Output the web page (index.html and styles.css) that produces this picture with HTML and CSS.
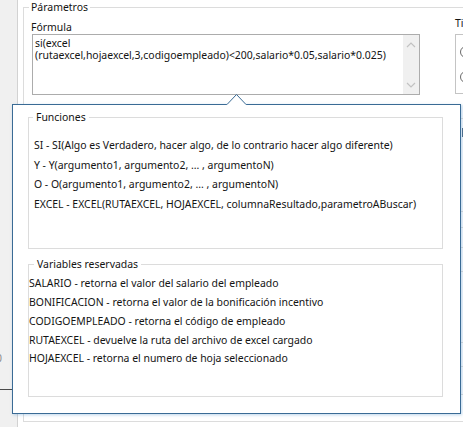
FILE: index.html
```html
<!DOCTYPE html>
<html lang="es">
<head>
<meta charset="utf-8">
<link rel="stylesheet" href="styles.css">
</head>
<body>
<div class="app">
  <div class="strip">
    <span class="strip-num">0</span>
    <div class="strip-line"></div>
  </div>
  <div class="main">
    <div class="group">
      <div class="legend legend-main">Párametros</div>
      <div class="row">
        <div class="col-formula">
          <div class="field-label">Fórmula</div>
          <div class="textbox">
            <div class="tb-text">si(excel <span class="nowrap">(rutaexcel,hojaexcel,3,codigoempleado)&lt;200,salario*0.05,salario*0.025)</span></div>
            <div class="tb-scroll">
              <svg class="chev" width="16" height="10" viewBox="0 0 16 10"><polyline points="4,7 8,3 12,7" fill="none" stroke="#c2c2c2" stroke-width="1.2"/></svg>
              <svg class="chev" width="16" height="10" viewBox="0 0 16 10"><polyline points="4,3 8,7 12,3" fill="none" stroke="#c2c2c2" stroke-width="1.2"/></svg>
            </div>
          </div>
        </div>
        <div class="col-tipo">
          <div class="tipo-label">Tipo</div>
          <div class="tipo-box">
            <span class="radio"></span>
            <span class="radio"></span>
          </div>
        </div>
      </div>
      <div class="rpanel">
        <div class="rp h14"></div>
        <div class="rp-mark"></div>
        <div class="rp h75"></div>
        <div class="rp h16"></div>
        <div class="rp h20"></div>
        <div class="rp h24"></div>
        <div class="rp h71"></div>
        <div class="rp h24"></div>
        <div class="rp h28"></div>
      </div>
    </div>
  </div>
</div>

<div class="popup">
  <svg class="arrow" width="21" height="12" viewBox="0 0 21 12">
    <polygon points="0.5,12 10.5,1.5 20.5,12" fill="#fff"/>
    <polyline points="1,11.5 10.5,1.5 20,11.5" fill="none" stroke="#3a6b95" stroke-width="1"/>
  </svg>
  <div class="box">
    <div class="legend legend-fn">Funciones</div>
    <ul class="list list-fn">
      <li>SI - SI(Algo es Verdadero, hacer algo, de lo contrario hacer algo diferente)</li>
      <li>Y - Y(argumento1, argumento2, ... , argumentoN)</li>
      <li>O - O(argumento1, argumento2, ... , argumentoN)</li>
      <li>EXCEL - EXCEL(RUTAEXCEL, HOJAEXCEL, columnaResultado,parametroABuscar)</li>
    </ul>
  </div>
  <div class="box box-vars">
    <div class="legend legend-vars">Variables reservadas</div>
    <ul class="list list-vars">
      <li>SALARIO - retorna el valor del salario del empleado</li>
      <li>BONIFICACION - retorna el valor de la bonificación incentivo</li>
      <li>CODIGOEMPLEADO - retorna el código de empleado</li>
      <li>RUTAEXCEL - devuelve la ruta del archivo de excel cargado</li>
      <li>HOJAEXCEL - retorna el numero de hoja seleccionado</li>
    </ul>
  </div>
</div>
</body>
</html>
```
FILE: styles.css
```css
html, body {
  margin: 0;
  padding: 0;
}
body {
  width: 463px;
  height: 427px;
  overflow: hidden;
  position: relative;
  background: #fff;
  font-family: "Noto Sans", "Open Sans", sans-serif;
  font-size: 10.45px;
  color: #141414;
}

.app {
  display: flex;
  height: 427px;
}

/* left gray strip */
.strip {
  flex: none;
  width: 17px;
  background: #f0f0f0;
  border-right: 1px solid #d2d2d2;
  display: flex;
  flex-direction: column;
  overflow: hidden;
}
.strip-num {
  margin-top: 351px;
  margin-left: -4px;
  line-height: 14px;
  color: #8a8a8a;
}
.strip-line {
  margin-top: 24px;
  height: 1px;
  background: #4a4a4a;
}

.main {
  flex: 1;
  min-width: 0;
  overflow: hidden;
}

/* "Párametros" group */
.group {
  box-sizing: border-box;
  width: 620px;
  height: 415px;
  margin: 7px 0 0 5px;
  border-top: 1px solid #dcdcdc;
  border-left: 1px solid #dcdcdc;
  border-bottom: 1px solid #dcdcdc;
}

.legend {
  width: fit-content;
  line-height: 14px;
  background: #fff;
  margin-top: -9px;
  padding-top: 0.5px;
}
.legend-main {
  margin-left: 5px;
  padding-left: 2px;
  padding-right: 2px;
}

.row {
  display: flex;
  align-items: flex-start;
  padding-left: 7px;
}

.col-formula {
  margin-top: 6px;
}
.field-label {
  line-height: 14px;
}
.textbox {
  box-sizing: border-box;
  margin-left: 1px;
  width: 388px;
  height: 61px;
  border: 1px solid #acacac;
  display: flex;
}
.tb-text {
  flex: 1;
  padding: 2px 0 0 2px;
  line-height: 12px;
}
.nowrap {
  white-space: nowrap;
}
.tb-scroll {
  flex: none;
  width: 16px;
  background: #f0f0f0;
  display: flex;
  flex-direction: column;
  justify-content: space-between;
  padding: 5px 0 4px;
}
.chev {
  display: block;
}

.col-tipo {
  margin-left: 35px;
  margin-top: 2px;
}
.tipo-label {
  line-height: 14px;
}
.tipo-box {
  box-sizing: border-box;
  width: 200px;
  height: 60px;
  margin-top: 4px;
  border: 1px solid #c4c4c4;
  display: flex;
  flex-direction: column;
  gap: 13px;
  padding: 11px 0 0 4px;
}
.radio {
  display: block;
  width: 10px;
  height: 10px;
  border: 1px solid #6a6a6a;
  border-radius: 50%;
}

/* content hidden behind the popup, visible as a sliver on the right */
.rpanel {
  margin: 10px 0 0 437px;
  width: 120px;
  background: #f6f9fc;
}
.rp {
  border-bottom: 1px solid #dadada;
}
.rp-mark {
  width: 2px;
  height: 9px;
  margin: 9px 0 0 1px;
  background: #4d6a85;
}
.h14 { height: 13px; }
.h75 { height: 74px; }
.h16 { height: 15px; }
.h20 { height: 19px; }
.h24 { height: 23px; }
.h71 { height: 70px; }
.h28 { height: 27px; }

/* tooltip popup */
.popup {
  position: absolute;
  left: 12px;
  top: 104px;
  box-sizing: border-box;
  width: 449px;
  height: 310px;
  border: 1px solid #3a6b95;
  background: #fff;
  padding: 12px 17px 0 15px;
  box-shadow: 1px 1px 3px rgba(70, 140, 200, 0.35);
}
.arrow {
  position: absolute;
  left: 213px;
  top: -12px;
  display: block;
}

.box {
  box-sizing: border-box;
  width: 415px;
  height: 132px;
  border: 1px solid #dcdcdc;
}
.box-vars {
  height: 133px;
  margin-top: 15px;
}
.legend-fn {
  margin-left: 4px;
  padding-left: 3px;
  padding-right: 3px;
}
.legend-vars {
  margin-left: 5px;
  padding-left: 3px;
  padding-right: 3px;
}

.list {
  list-style: none;
  margin: 0;
  padding: 0;
  white-space: nowrap;
}
.list-fn {
  margin-top: 12.5px;
  padding-left: 5px;
  line-height: 19.5px;
}
.list-vars {
  margin-top: 3.5px;
  line-height: 18.85px;
}
```
